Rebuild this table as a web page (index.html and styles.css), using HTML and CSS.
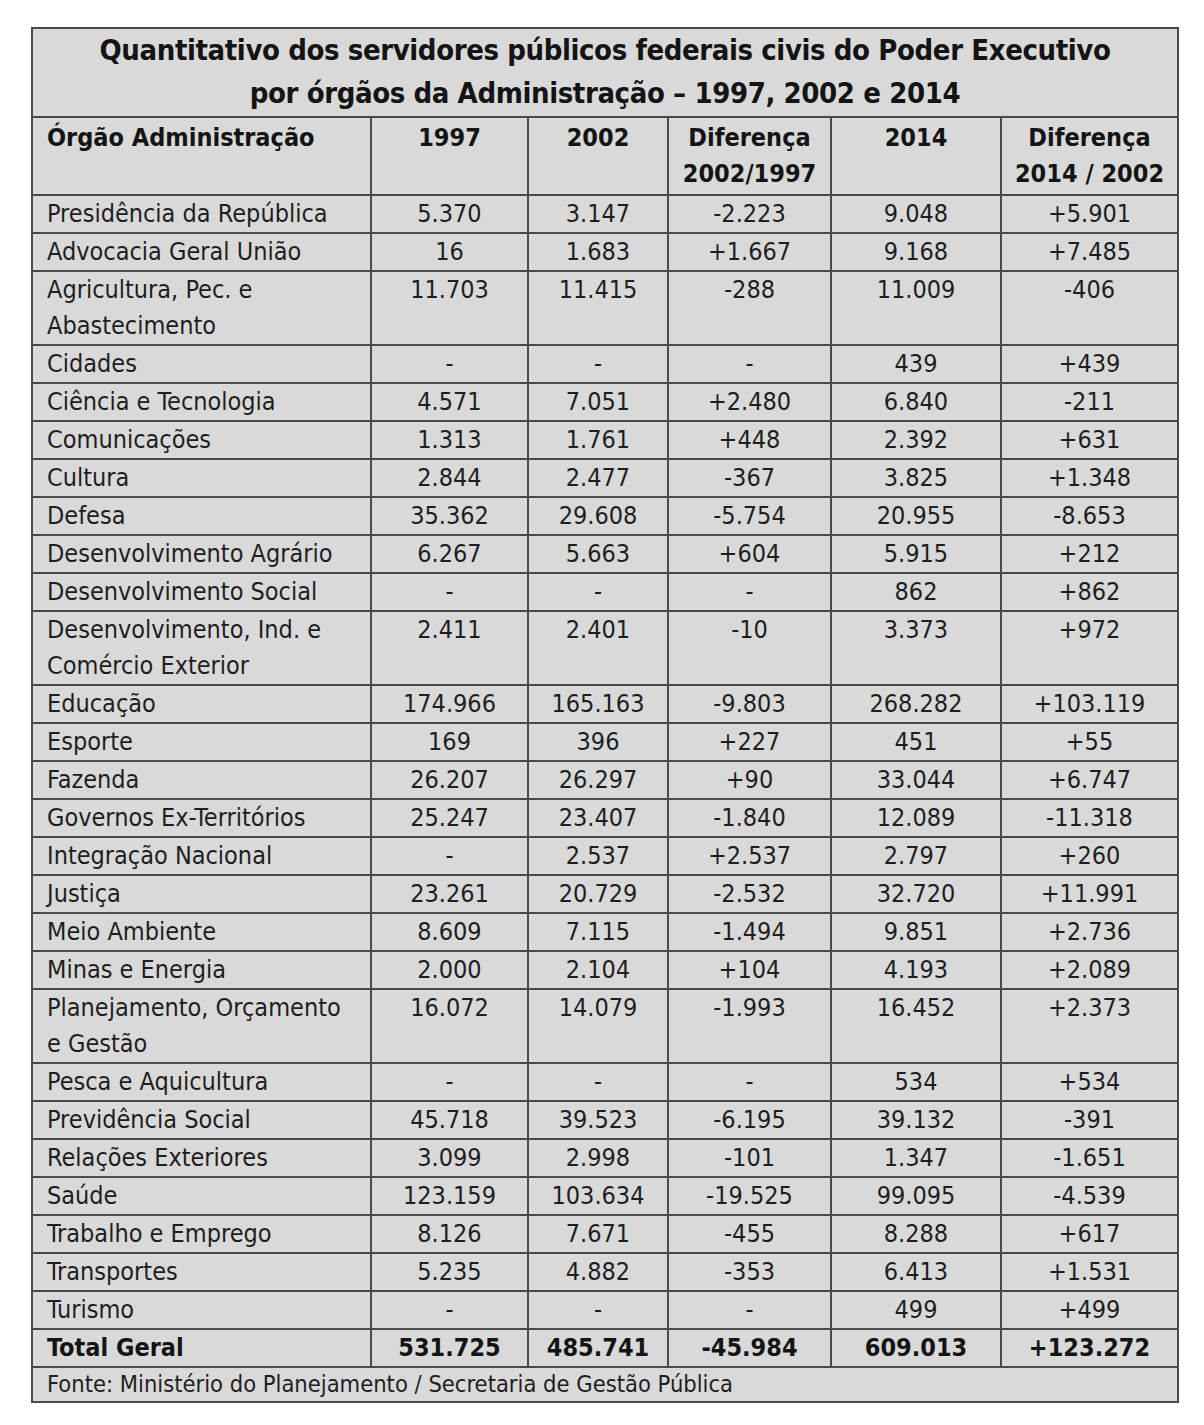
FILE: index.html
```html
<!DOCTYPE html>
<html lang="pt">
<head>
<meta charset="utf-8">
<title>Quantitativo dos servidores</title>
<link rel="stylesheet" href="styles.css">
</head>
<body>
<div class="page">
<table class="tbl">
<colgroup>
<col class="c1"><col class="c2"><col class="c3"><col class="c4"><col class="c5"><col class="c6">
</colgroup>
<thead>
<tr><th colspan="6" class="title">Quantitativo dos servidores públicos federais civis do Poder Executivo<br>por órgãos da Administração – 1997, 2002 e 2014</th></tr>
<tr class="head">
<th class="name">Órgão Administração</th><th>1997</th><th>2002</th><th>Diferença<br>2002/1997</th><th>2014</th><th>Diferença<br>2014 / 2002</th>
</tr>
</thead>
<tbody>
<tr><td class="name">Presidência da República</td><td>5.370</td><td>3.147</td><td>-2.223</td><td>9.048</td><td>+5.901</td></tr>
<tr><td class="name">Advocacia Geral União</td><td>16</td><td>1.683</td><td>+1.667</td><td>9.168</td><td>+7.485</td></tr>
<tr><td class="name">Agricultura, Pec. e<br>Abastecimento</td><td>11.703</td><td>11.415</td><td>-288</td><td>11.009</td><td>-406</td></tr>
<tr><td class="name">Cidades</td><td>-</td><td>-</td><td>-</td><td>439</td><td>+439</td></tr>
<tr><td class="name">Ciência e Tecnologia</td><td>4.571</td><td>7.051</td><td>+2.480</td><td>6.840</td><td>-211</td></tr>
<tr><td class="name">Comunicações</td><td>1.313</td><td>1.761</td><td>+448</td><td>2.392</td><td>+631</td></tr>
<tr><td class="name">Cultura</td><td>2.844</td><td>2.477</td><td>-367</td><td>3.825</td><td>+1.348</td></tr>
<tr><td class="name">Defesa</td><td>35.362</td><td>29.608</td><td>-5.754</td><td>20.955</td><td>-8.653</td></tr>
<tr><td class="name">Desenvolvimento Agrário</td><td>6.267</td><td>5.663</td><td>+604</td><td>5.915</td><td>+212</td></tr>
<tr><td class="name">Desenvolvimento Social</td><td>-</td><td>-</td><td>-</td><td>862</td><td>+862</td></tr>
<tr><td class="name">Desenvolvimento, Ind. e<br>Comércio Exterior</td><td>2.411</td><td>2.401</td><td>-10</td><td>3.373</td><td>+972</td></tr>
<tr><td class="name">Educação</td><td>174.966</td><td>165.163</td><td>-9.803</td><td>268.282</td><td>+103.119</td></tr>
<tr><td class="name">Esporte</td><td>169</td><td>396</td><td>+227</td><td>451</td><td>+55</td></tr>
<tr><td class="name">Fazenda</td><td>26.207</td><td>26.297</td><td>+90</td><td>33.044</td><td>+6.747</td></tr>
<tr><td class="name">Governos Ex-Territórios</td><td>25.247</td><td>23.407</td><td>-1.840</td><td>12.089</td><td>-11.318</td></tr>
<tr><td class="name">Integração Nacional</td><td>-</td><td>2.537</td><td>+2.537</td><td>2.797</td><td>+260</td></tr>
<tr><td class="name">Justiça</td><td>23.261</td><td>20.729</td><td>-2.532</td><td>32.720</td><td>+11.991</td></tr>
<tr><td class="name">Meio Ambiente</td><td>8.609</td><td>7.115</td><td>-1.494</td><td>9.851</td><td>+2.736</td></tr>
<tr><td class="name">Minas e Energia</td><td>2.000</td><td>2.104</td><td>+104</td><td>4.193</td><td>+2.089</td></tr>
<tr><td class="name">Planejamento, Orçamento<br>e Gestão</td><td>16.072</td><td>14.079</td><td>-1.993</td><td>16.452</td><td>+2.373</td></tr>
<tr><td class="name">Pesca e Aquicultura</td><td>-</td><td>-</td><td>-</td><td>534</td><td>+534</td></tr>
<tr><td class="name">Previdência Social</td><td>45.718</td><td>39.523</td><td>-6.195</td><td>39.132</td><td>-391</td></tr>
<tr><td class="name">Relações Exteriores</td><td>3.099</td><td>2.998</td><td>-101</td><td>1.347</td><td>-1.651</td></tr>
<tr><td class="name">Saúde</td><td>123.159</td><td>103.634</td><td>-19.525</td><td>99.095</td><td>-4.539</td></tr>
<tr><td class="name">Trabalho e Emprego</td><td>8.126</td><td>7.671</td><td>-455</td><td>8.288</td><td>+617</td></tr>
<tr><td class="name">Transportes</td><td>5.235</td><td>4.882</td><td>-353</td><td>6.413</td><td>+1.531</td></tr>
<tr><td class="name">Turismo</td><td>-</td><td>-</td><td>-</td><td>499</td><td>+499</td></tr>
<tr class="total"><td class="name">Total Geral</td><td>531.725</td><td>485.741</td><td>-45.984</td><td>609.013</td><td>+123.272</td></tr>
</tbody>
<tfoot>
<tr><td colspan="6" class="foot">Fonte: Ministério do Planejamento / Secretaria de Gestão Pública</td></tr>
</tfoot>
</table>
</div>
</body>
</html>
```

FILE: styles.css
```css
html, body {
  margin: 0;
  padding: 0;
  background: #ffffff;
}
.page {
  padding: 27px 0 0 31px;
}
.tbl {
  border-collapse: collapse;
  table-layout: fixed;
  width: 1146px;
  background: #d9d9d9;
  color: #1e1e1e;
  font-family: "DejaVu Sans Condensed", "Liberation Sans Narrow", "Liberation Sans", sans-serif;
  font-size: 25px;
  border: 2px solid #333333;
}
.c1 { width: 339px; }
.c2 { width: 157px; }
.c3 { width: 140px; }
.c4 { width: 163px; }
.c5 { width: 170px; }
.c6 { width: 177px; }
.tbl td, .tbl th {
  border: 2px solid #4a4a4a;
  padding: 0;
  line-height: 36px;
  vertical-align: top;
  text-align: center;
}
.tbl th {
  font-weight: bold;
  color: #141414;
}
.tbl .title {
  font-size: 29px;
  letter-spacing: -0.4px;
  line-height: 43px;
  padding: 0 0 1px;
}
.tbl .head th {
  padding-top: 2px;
  padding-bottom: 2px;
}
.tbl .name,
.tbl .head th.name {
  text-align: left;
  padding-left: 14px;
}
.tbl .total td {
  font-weight: bold;
  color: #141414;
}
.tbl .foot {
  text-align: left;
  padding-left: 14px;
  font-size: 23.5px;
  line-height: 33px;
}
```
